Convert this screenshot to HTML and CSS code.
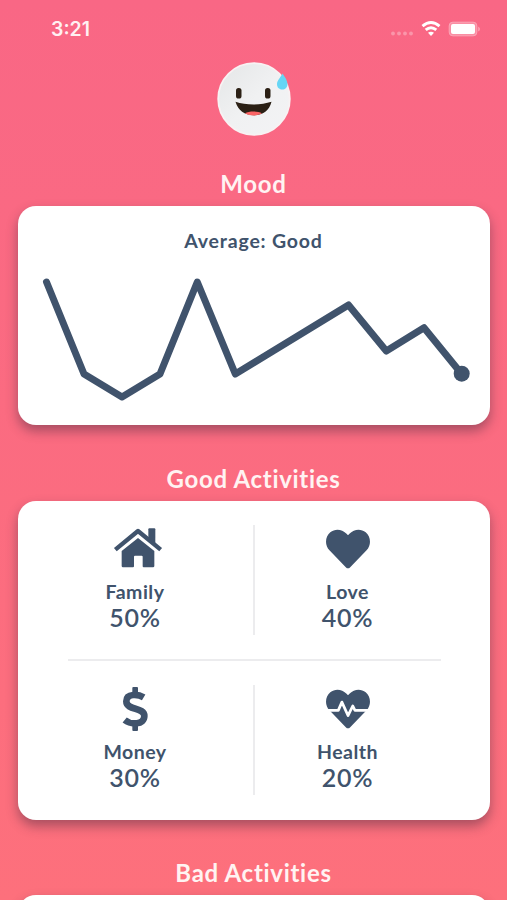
FILE: index.html
```html
<!DOCTYPE html>
<html lang="en">
  <head>
    <meta charset="UTF-8" />
    <meta name="viewport" content="width=device-width, initial-scale=1.0" />
    <title>Mood</title>
    <link rel="stylesheet" href="styles.css">
  </head>
  <body>
    <header class="status-bar">
      <span class="time">3:21</span>
      <div class="status-icons">
        <svg class="signal" width="24" height="16" viewBox="0 0 24 16">
          <circle cx="3" cy="12.500" r="1.900" />
          <circle cx="9" cy="12.500" r="1.900" />
          <circle cx="15" cy="12.500" r="1.900" />
          <circle cx="21" cy="12.500" r="1.900" />
        </svg>
        <svg class="wifi" width="20" height="16" viewBox="0 0 20 16">
          <path d="M1.500 5.200Q10-2 18.500 5.200M4.700 8.900Q10 4.400 15.300 8.900" />
          <path class="wifi-dot" d="M7 11.800Q10 9.500 13 11.800L10 15Z" />
        </svg>
        <svg class="battery" width="32" height="16" viewBox="0 0 32 16">
          <rect class="battery-case" x="1" y="1" width="28" height="14" rx="4" />
          <rect x="3" y="3" width="24" height="10" rx="2" />
          <path class="battery-tip" d="M30.2 5.500Q32 6.500 32 8T30.2 10.500Z" />
        </svg>
      </div>
    </header>

    <main>
      <svg class="face" width="74" height="74" viewBox="0 0 74 74">
        <defs>
          <linearGradient id="skin" x1="0" y1="0" x2="1" y2="1">
            <stop offset="0" stop-color="#e4e6e7" />
            <stop offset="0.5" stop-color="#f0f1f2" />
            <stop offset="1" stop-color="#f3f3f5" />
          </linearGradient>
        </defs>
        <circle cx="37" cy="37" r="35.8" fill="url(#skin)" stroke="#f8f2f3" stroke-width="1.8" />
        <rect x="19" y="26" width="5.500" height="10.500" rx="2.600" fill="#2b2015" />
        <rect x="48" y="26" width="5.500" height="10.500" rx="2.600" fill="#2b2015" />
        <path d="M18.500 39.800C29 43.300 44 43.300 54.500 39.800C52.500 48.500 46 53.300 37 53.300C27.500 53.300 21 48.500 18.500 39.800Z" fill="#2b2015" />
        <path d="M28 51.200C32 48.900 41 48.900 44.800 51.200C40 54.200 33 54.200 28 51.200Z" fill="#fb6465" />
        <path d="M65.500 11.500C68 15 70.500 18.500 70.500 22C70.500 25.500 68.300 27.500 65.200 27.500C62 27.500 60 25.200 60 22C60 18.500 63.500 15.500 65.500 11.500Z" fill="#66d6f5" />
      </svg>

      <h2>Mood</h2>
      <section class="card mood-card">
        <p class="average">Average: Good</p>
        <svg class="chart" width="472" height="136" viewBox="18 272 472 136">
          <polyline points="46.500,282 84,374 122,397 160,374 197.300,282 235.300,374 348.500,305 386.300,351 424,327.700 461.700,374" />
          <circle cx="461.700" cy="373.700" r="8" />
        </svg>
      </section>

      <h2>Good Activities</h2>
      <section class="card activities">
        <div class="row">
          <div class="activity">
            <svg class="icon house" width="50" height="44" viewBox="0 0 150 132">
              <path d="M7 68L75 12L143 68" fill="none" stroke="#40536c" stroke-width="13" stroke-linejoin="round" />
              <path d="M106 7Q106 4 109 4H124Q127 4 127 7V51L106 34Z" />
              <path d="M75 33L124 72V117Q124 121 120 121H92Q89 121 89 118V89Q89 86 86 86H66Q63 86 63 89V118Q63 121 60 121H30Q26 121 26 117V72Z" />
            </svg>
            <span class="name">Family</span>
            <span class="percent">50%</span>
          </div>
          <div class="divider"></div>
          <div class="activity">
            <svg class="icon" width="44" height="44" viewBox="0 0 512 512">
              <path d="M462 62C407 16 326 24 276 76L256 96L236 76C186 24 105 16 50 62C-13 116-16 213 40 271L233 470C246 483 266 483 279 470L472 271C528 213 525 116 462 62Z" />
            </svg>
            <span class="name">Love</span>
            <span class="percent">40%</span>
          </div>
        </div>
        <hr />
        <div class="row">
          <div class="activity">
            <svg class="icon" width="26" height="44" viewBox="0 0 78 132">
              <path d="M65 31C50 22 13 17 13 43C13 72 67 59 67 87C67 114 27 114 8 99" fill="none" stroke="#40536c" stroke-width="20" />
              <rect x="31" y="0" width="17" height="28" rx="3" />
              <rect x="31" y="104" width="17" height="28" rx="3" />
            </svg>
            <span class="name">Money</span>
            <span class="percent">30%</span>
          </div>
          <div class="divider"></div>
          <div class="activity">
            <svg class="icon" width="44" height="44" viewBox="0 0 512 512">
              <path d="M462 62C407 16 326 24 276 76L256 96L236 76C186 24 105 16 50 62C-13 116-16 213 40 271L233 470C246 483 266 483 279 470L472 271C528 213 525 116 462 62Z" />
              <path d="M0 272H143L185 176L256 332L311 221L337 272H512" fill="none" stroke="#fff" stroke-width="32" stroke-linejoin="round" />
            </svg>
            <span class="name">Health</span>
            <span class="percent">20%</span>
          </div>
        </div>
      </section>

      <h2>Bad Activities</h2>
      <section class="card activities"></section>
    </main>
  </body>
</html>
```
FILE: styles.css
```css
body {
  margin: 0;
  height: 900px;
  overflow: hidden;
  font-family: Lato, sans-serif;
  color: #40536c;
  background: linear-gradient(#f96785, #fd707c);
}
.status-bar {
  display: flex;
  justify-content: space-between;
  align-items: center;
  height: 57px;
  padding: 0 27px 0 51px;
  box-sizing: border-box;
  color: #fff0f2;
}
.time {
  font-family: Inter, sans-serif;
  font-size: 19.5px;
  font-weight: 600;
}
.status-icons {
  display: flex;
  align-items: center;
  gap: 7px;
  fill: #fff;
}
.signal {
  opacity: 0.3;
}
.wifi {
  fill: none;
  stroke: #fff;
  stroke-width: 2.9;
}
.wifi-dot {
  fill: #fff;
  stroke: none;
}
.battery-case {
  fill: #fff;
  fill-opacity: 0.25;
  stroke: #fff;
  stroke-opacity: 0.25;
}
.battery-tip {
  opacity: 0.4;
}
main {
  display: flex;
  flex-direction: column;
  align-items: center;
  padding-top: 5px;
}
.face {
  margin-bottom: 33px;
}
h2 {
  margin: 0 0 7px;
  height: 30px;
  line-height: 30px;
  font-size: 24px;
  font-weight: 700;
  letter-spacing: 0.7px;
  color: #fff3f2;
}
.card {
  width: 472px;
  box-sizing: border-box;
  background: #fff;
  border-radius: 18px;
  box-shadow: 0 6px 12px rgba(64, 40, 60, 0.45);
}
.mood-card {
  height: 218.5px;
  margin-bottom: 39.5px;
  padding-top: 22px;
}
.average {
  margin: 0;
  height: 26px;
  line-height: 26px;
  font-size: 19.5px;
  font-weight: 700;
  letter-spacing: 0.8px;
  text-align: center;
}
.chart {
  display: block;
  margin-top: 18px;
}
.chart polyline {
  fill: none;
  stroke: #40536c;
  stroke-width: 7;
  stroke-linecap: round;
  stroke-linejoin: round;
}
.chart circle,
.icon {
  fill: #40536c;
}
.activities {
  height: 318.5px;
  margin-bottom: 38.5px;
  padding-top: 24px;
}
.row {
  display: grid;
  grid-template-columns: 235px 2px 186px;
  height: 110px;
}
.activity {
  display: flex;
  flex-direction: column;
  align-items: center;
  padding-top: 2px;
}
.house {
  margin-left: 6px;
}
.divider {
  background: #ececee;
}
.name {
  height: 24px;
  margin-top: 9px;
  line-height: 24px;
  font-size: 19.5px;
  font-weight: 700;
  letter-spacing: 0.5px;
}
.percent {
  line-height: 26px;
  font-size: 25px;
  font-weight: 600;
  letter-spacing: 0.7px;
}
hr {
  width: 373px;
  height: 2px;
  margin: 24px 49px 24px 50px;
  border: none;
  background: #ececee;
}
```
